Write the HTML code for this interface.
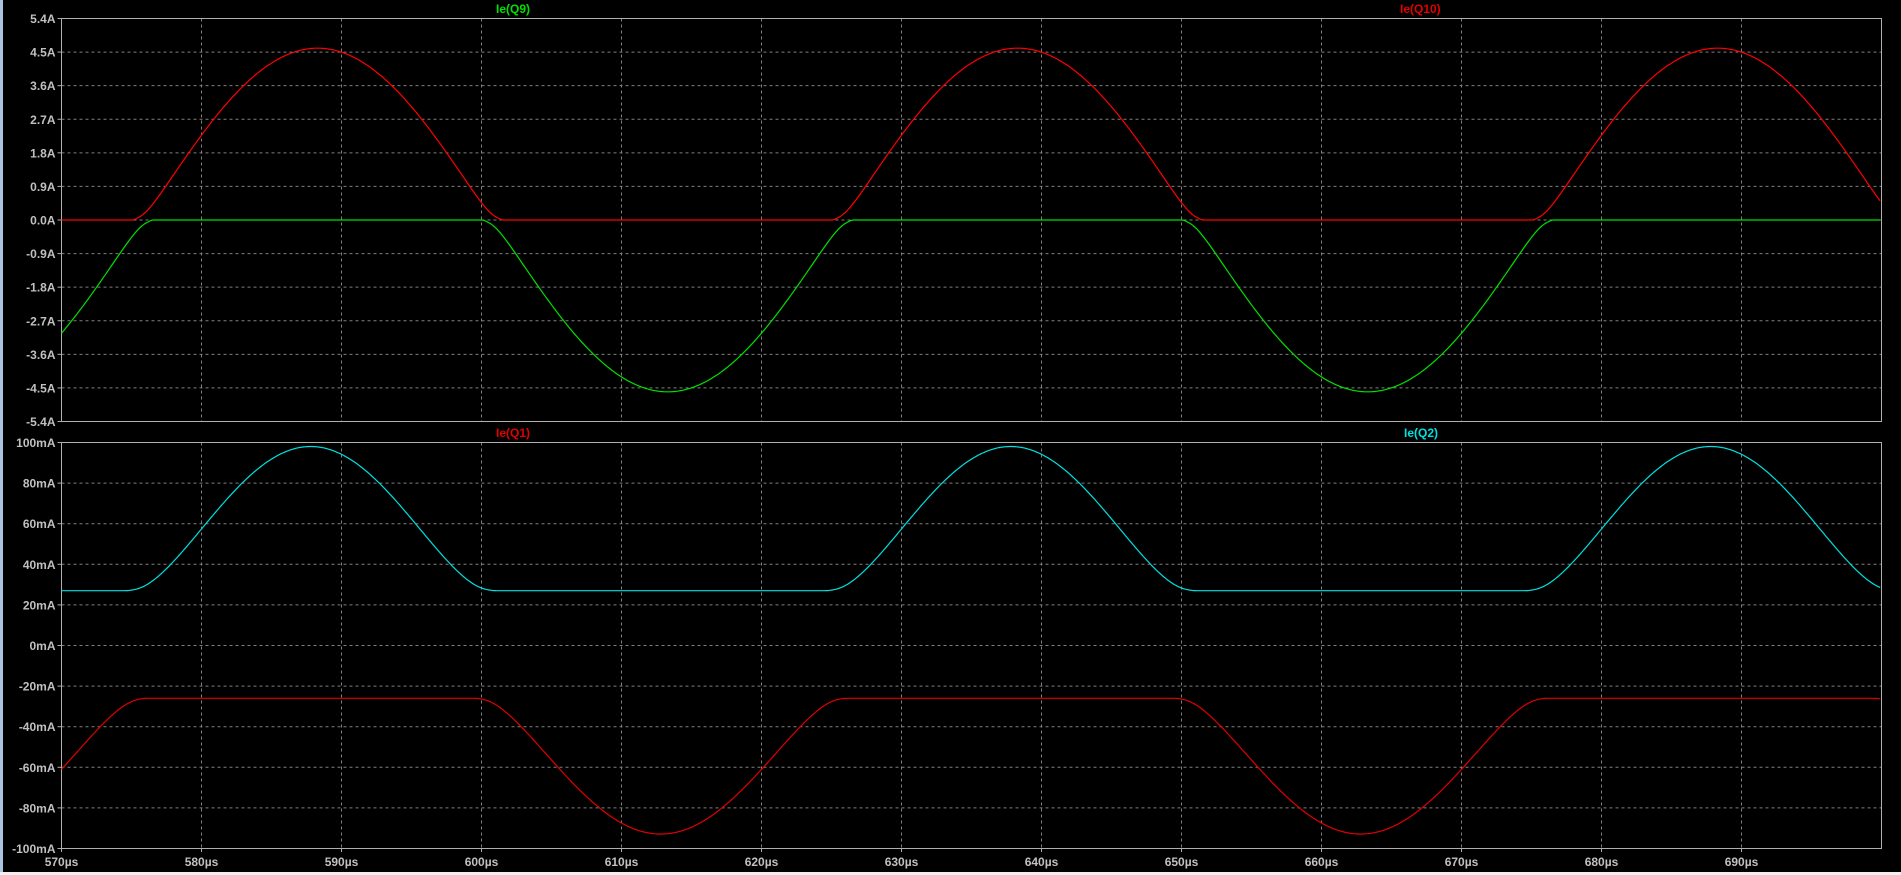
<!DOCTYPE html>
<html><head><meta charset="utf-8"><style>
html,body{margin:0;padding:0;background:#000;width:1901px;height:875px;overflow:hidden}
svg{display:block}
text{font-family:"Liberation Sans",sans-serif;font-weight:bold}
</style></head><body>
<svg id="s" width="1901" height="875" xmlns="http://www.w3.org/2000/svg">
<rect width="1901" height="875" fill="#000"/>
<rect x="0" y="0" width="3" height="875" fill="#a8c4e0"/>
<rect x="0" y="872" width="1901" height="3" fill="#f0f0f0"/>
<g id="g"></g>
</svg>
<script>
var g=document.getElementById('g'),NS='http://www.w3.org/2000/svg';
function el(t,a,txt){var e=document.createElementNS(NS,t);for(var k in a)e.setAttribute(k,a[k]);if(txt!==undefined)e.textContent=txt;g.appendChild(e);return e;}
var L=61.5,R=1881.5;
function X(t){return L+(t-570)*14;}
var P=[{top:18.5,bot:421.5,n:12,labels:["5.4A","4.5A","3.6A","2.7A","1.8A","0.9A","0.0A","-0.9A","-1.8A","-2.7A","-3.6A","-4.5A","-5.4A"]},
{top:442.5,bot:848.5,n:10,labels:["100mA","80mA","60mA","40mA","20mA","0mA","-20mA","-40mA","-60mA","-80mA","-100mA"]}];
P.forEach(function(p){
  var dy=(p.bot-p.top)/p.n;
  for(var i=1;i<p.n;i++){var y=p.top+i*dy;el('line',{x1:L,x2:R,y1:y,y2:y,stroke:'#808080','stroke-dasharray':'3,3'});}
  for(var j=1;j<13;j++){var x=L+j*140;el('line',{x1:x,x2:x,y1:p.top,y2:p.bot,stroke:'#808080','stroke-dasharray':'3,3'});}
  el('rect',{x:L,y:p.top,width:R-L,height:p.bot-p.top,fill:'none',stroke:'#b0b0b0','stroke-width':1});
  for(var i=0;i<=p.n;i++){var y=p.top+i*dy;el('line',{x1:L-4,x2:L,y1:y,y2:y,stroke:'#b0b0b0'});
    el('text',{x:L-6,y:y+4.5,'text-anchor':'end','font-size':'12',fill:'#c0c0c0'},p.labels[i]);}
});
for(var j=0;j<13;j++){var x=L+j*140;el('line',{x1:x,x2:x,y1:848.5,y2:852,stroke:'#b0b0b0'});
  el('text',{x:x,y:866,'text-anchor':'middle','font-size':'12',fill:'#c0c0c0'},(570+10*j)+'\u00b5s');}
function curve(f,p,vmax,vmin,col){
  var pts=[];for(var t=570;t<=700;t+=0.1){var v=f(t);var y=p.top+(vmax-v)/(vmax-vmin)*(p.bot-p.top);pts.push(X(t).toFixed(1)+','+y.toFixed(1));}
  el('polyline',{points:pts.join(' '),fill:'none',stroke:col,'stroke-width':1.2});
}
function sp(x,e){return 0.5*(x+Math.sqrt(x*x+e*e));}
function sinw(t,start){return Math.sin(Math.PI*(t-start)/25);}
curve(function(t){return 4.73*Math.max(0,sp(sinw(t,575.8),0.12)-0.03);},P[0],5.4,-5.4,'#ff0000');
curve(function(t){return -4.73*Math.max(0,sp(sinw(t,600.8),0.12)-0.03);},P[0],5.4,-5.4,'#00e000');
curve(function(t){return 27+74.6*Math.pow(Math.max(0,sp(sinw(t,575.3),0.15)-0.04),1.4);},P[1],100,-100,'#00e0e0');
curve(function(t){return -26-70*Math.pow(Math.max(0,sp(sinw(t,600.3),0.15)-0.04),1.3);},P[1],100,-100,'#e00000');
el('text',{x:496,y:13,'font-size':'12',fill:'#00e000'},'Ie(Q9)');
el('text',{x:1400,y:13,'font-size':'12',fill:'#e00000'},'Ie(Q10)');
el('text',{x:496,y:437,'font-size':'12',fill:'#e00000'},'Ie(Q1)');
el('text',{x:1404,y:437,'font-size':'12',fill:'#00e0e0'},'Ie(Q2)');
</script>
</body></html>
